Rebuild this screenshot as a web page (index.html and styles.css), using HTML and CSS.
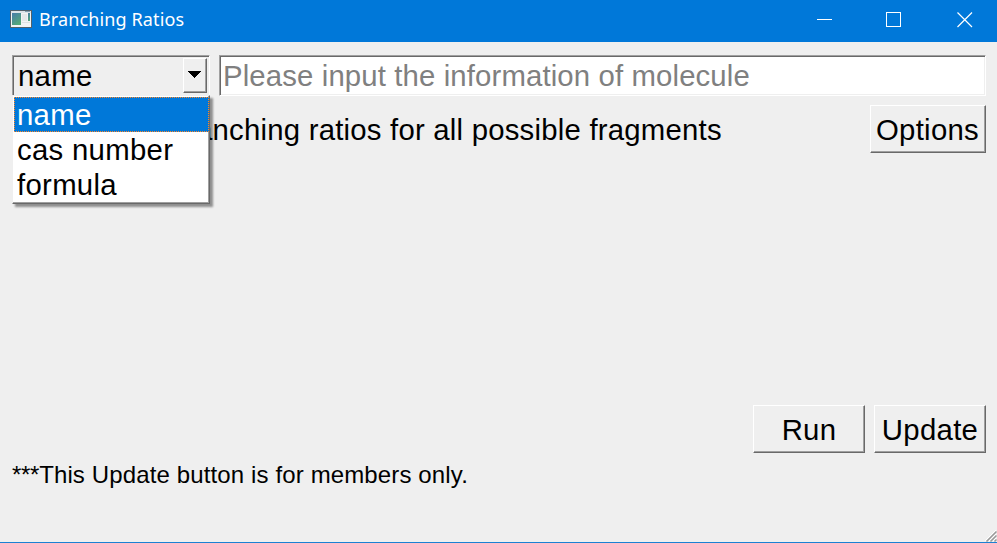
FILE: index.html
```html
<!DOCTYPE html>
<html lang="en">
<head>
<meta charset="utf-8">
<title>Branching Ratios</title>
<link rel="stylesheet" href="styles.css">
</head>
<body>
<div class="window">
  <header class="titlebar">
    <svg class="app-icon" width="22" height="18" viewBox="0 0 22 18">
      <defs><linearGradient id="g" x1="0" y1="0" x2=".6" y2="1"><stop offset="0" stop-color="#477caa"/><stop offset="1" stop-color="#55a878"/></linearGradient></defs>
      <rect width="22" height="18" fill="#52616c"/>
      <rect x="1" y="1" width="20" height="16" fill="#f3f4f4"/>
      <rect x="1" y="1" width="20" height="2" fill="#dce3e8"/>
      <rect x="15" y="1" width="5" height="1" fill="#849eaf"/>
      <rect x="2" y="3" width="9" height="12" fill="url(#g)"/>
      <rect x="12" y="4" width="5" height="7" fill="#e5e8e9"/>
      <rect x="18" y="3" width="2" height="8" fill="url(#g)"/>
      <path d="M12 12.5h8" stroke="#dfe2e3"/>
    </svg>
    <h1 class="title">Branching Ratios</h1>
    <svg class="controls" width="156" height="16" viewBox="0 0 156 16" fill="none" stroke="#fff">
      <path d="M0 7.5h15"/>
      <rect x="69.500" y=".5" width="14" height="14"/>
      <path d="M140.500 .5l14.500 14.500M155 .5l-14.500 14.500" stroke-width="1.200"/>
    </svg>
  </header>
  <main class="content">
    <div class="query">
      <div class="combo">
        <div class="sunken combo-box">
          <span>name</span>
          <span class="combo-button"><svg width="13" height="7" viewBox="0 0 13 7" shape-rendering="crispEdges"><path d="M0 0h13v1h-1v1h-1v1h-1v1h-1v1h-1v1h-1v1h-1v-1h-1v-1h-1v-1h-1v-1h-1v-1h-1v-1h-1z"/></svg></span>
        </div>
        <ul class="popup">
          <li class="item selected">name</li>
          <li class="item">cas number</li>
          <li class="item">formula</li>
        </ul>
      </div>
      <div class="sunken field">Please input the information of molecule</div>
    </div>
    <div class="options-row">
      <span class="label">anching ratios for all possible fragments</span>
      <button class="button options">Options</button>
    </div>
    <div class="actions">
      <button class="button">Run</button>
      <button class="button">Update</button>
    </div>
    <p class="note"><span class="stars">***</span>This Update button is for members only.</p>
  </main>
  <svg class="grip" width="12" height="12" viewBox="0 0 12 12"><g fill="none" stroke="#fff"><path d="M0 11L11 0M4 11l7-7M8 11l3-3"/></g><g fill="none" stroke="#999" stroke-width="1.500"><path d="M1.500 11.500l10-10M5.500 11.500l6-6M9.500 11.500l2-2"/></g></svg>
</div>
</body>
</html>
```
FILE: styles.css
```css
* { box-sizing: border-box; }
body { margin: 0; background: #efefef; color: #000; font: 29.33px "Liberation Sans", Arial, sans-serif; overflow: hidden; }
.window { position: relative; height: 543px; border-bottom: 1px solid #1c81d2; }
.titlebar { display: flex; align-items: center; height: 42px; padding: 0 24px 3px 11px; background: #0078d9; color: #fff; }
.app-icon { flex: none; margin: -2px 1px 0 -1px; }
.title { flex: 1; margin: -2px 0 0 6px; font: 18px/28px "Noto Sans", "Open Sans", sans-serif; letter-spacing: .12px; white-space: nowrap; }
.controls { flex: none; margin-top: 1px; }
.content { padding: 13px 11px 0 12px; }
.query { display: flex; gap: 9px; height: 41px; }
.combo { position: relative; width: 198px; letter-spacing: .3px; }
.sunken { display: flex; align-items: center; height: 41px; border: 1px solid; border-color: #a0a0a0 #fff #fff #a0a0a0; box-shadow: inset 1px 1px #696969, inset -1px -1px #efefef; white-space: nowrap; }
.combo-box { justify-content: space-between; padding: 0 2px 0 5px; }
.combo-button { display: flex; align-items: center; justify-content: center; width: 24px; height: 35px; padding: 0 2px 3px 0; border: 1px solid; border-color: #fff #696969 #696969 #fff; box-shadow: inset -1px -1px #a0a0a0; }
.popup { position: absolute; z-index: 1; left: 0; top: 40px; width: 198px; height: 109px; margin: 0; padding: 1px; list-style: none; background: #fff; border: 1px solid; border-color: #efefef #696969 #696969 #efefef; box-shadow: inset -1px -1px #a0a0a0, 3px 3px 2px rgba(0,0,0,.4); }
.item { height: 35px; padding-left: 3px; line-height: 35px; white-space: nowrap; }
.selected { width: 195px; padding-left: 2px; background: #0078d9; color: #fff; border: 1px dotted #ff8726; line-height: 33px; }
.field { flex: 1; padding-left: 3px; background: #fff; color: #808080; letter-spacing: .13px; }
.options-row { display: flex; justify-content: space-between; margin-top: 9px; height: 48px; }
.label { margin-left: 184px; line-height: 50px; letter-spacing: .22px; white-space: nowrap; }
.button { width: 112px; height: 48px; padding: 2px 0 0; font: inherit; letter-spacing: .3px; color: #000; background: #efefef; border: 1px solid; border-color: #fff #696969 #696969 #fff; box-shadow: inset -1px -1px #a0a0a0; border-radius: 0; }
.options { width: 116px; padding-right: 1px; }
.actions { display: flex; justify-content: flex-end; gap: 9px; margin-top: 252px; }
.note { margin: 8px 0 0; font-size: 24px; line-height: 28px; letter-spacing: .13px; white-space: nowrap; }
.stars { letter-spacing: -.3px; }
.grip { position: absolute; right: 0; bottom: 0; }
```
